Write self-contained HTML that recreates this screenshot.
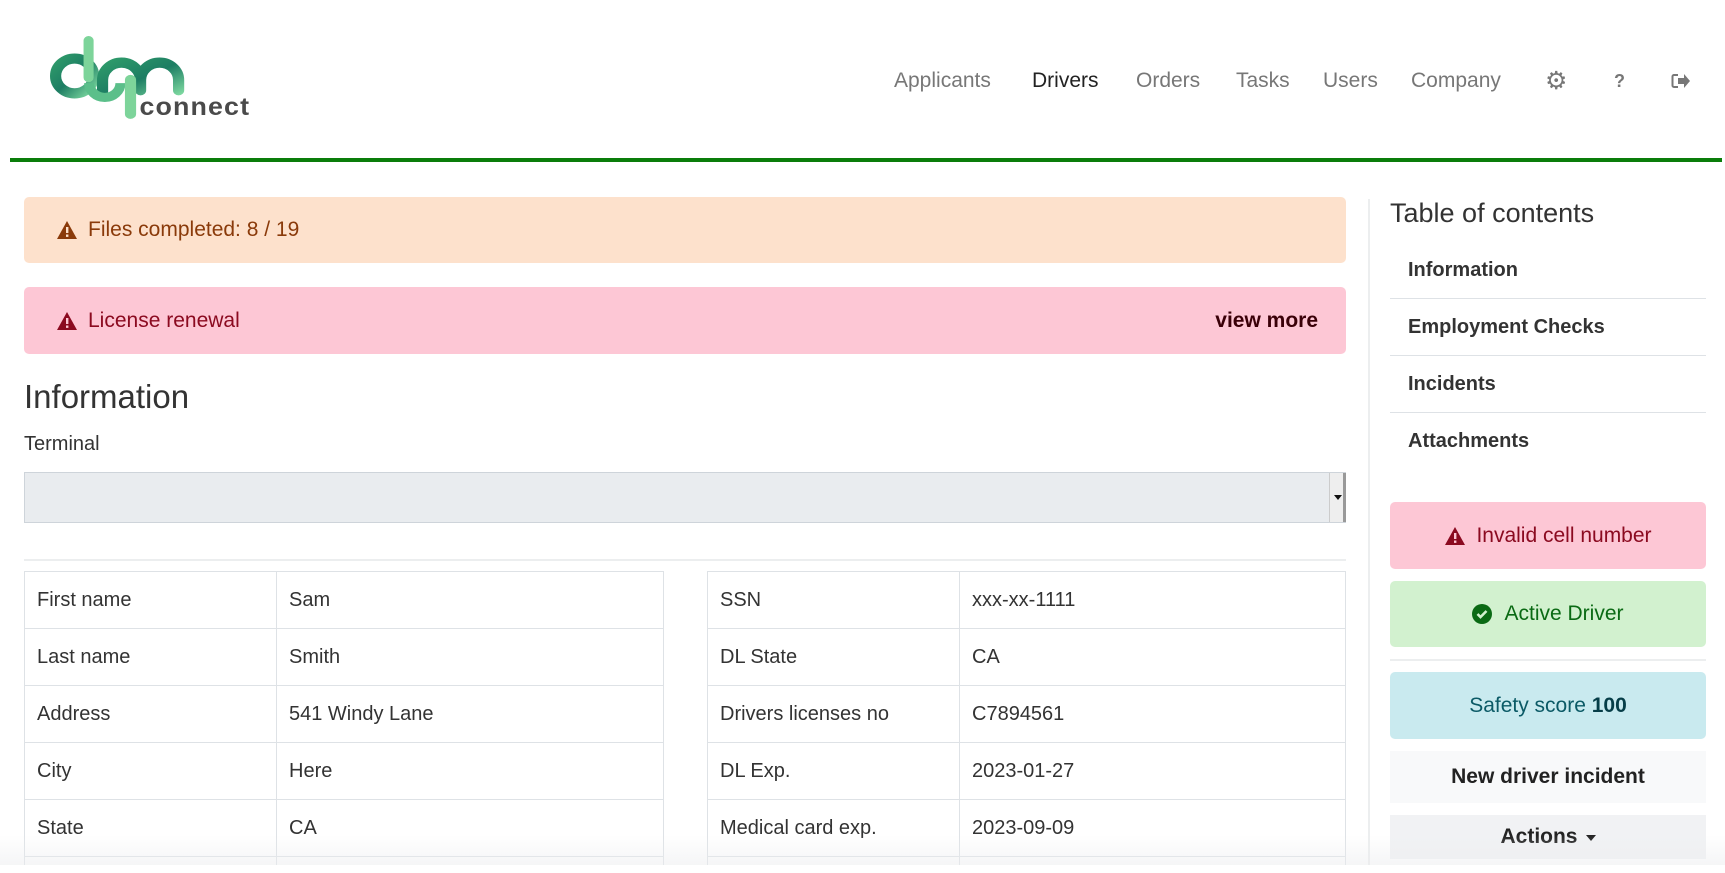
<!DOCTYPE html>
<html><head><meta charset="utf-8"><style>
*{box-sizing:border-box;margin:0;padding:0}
html,body{width:1725px;height:873px;overflow:hidden;background:#fff}
body{font-family:"Liberation Sans",sans-serif;color:#333}
#wrap{position:relative;width:1725px;height:873px;overflow:hidden}
.abs{position:absolute}
.nav{position:absolute;top:69px;font-size:21px;color:#777}
.alert{position:absolute;left:24px;width:1322px;border-radius:5px;font-size:21px;display:flex;align-items:center;padding-left:32px}
.tri{width:22px;height:20px;margin-right:10px}
table{position:absolute;border-collapse:collapse;font-size:20px;color:#333}
td{border:1px solid #dee2e6;height:57px;padding:0 12px}
.toc{position:absolute;left:1390px;width:316px;height:57px;border-bottom:1px solid #dee2e6;font-size:20px;font-weight:bold;color:#333;padding-left:18px;line-height:57px}
.box{position:absolute;left:1390px;width:316px;border-radius:5px;display:flex;align-items:center;justify-content:center;font-size:21px}
</style></head><body><div id="wrap">
<svg class="abs" style="left:50px;top:34px" width="208" height="88" viewBox="0 0 186 86" preserveAspectRatio="none">
<defs><linearGradient id="g" x1="0" y1="0" x2="1" y2="1"><stop offset="0" stop-color="#2e9a6a"/><stop offset=".5" stop-color="#1d7d63"/><stop offset="1" stop-color="#7dd8a0"/></linearGradient></defs>
<circle cx="22" cy="41" r="17" fill="none" stroke="url(#g)" stroke-width="10"/>
<rect x="30" y="2" width="9" height="45" rx="4.5" fill="#7dd49a"/>
<path d="M47 60 V45 a17 17 0 0 1 34 0 V55 M81 45 a17 17 0 0 1 34 0 V55" fill="none" stroke="url(#g)" stroke-width="10" stroke-linecap="round"/>
<path d="M35 48 a14 14 0 0 0 28 0" fill="none" stroke="#5bbf8a" stroke-width="9"/>
<rect x="67" y="40" width="10" height="43" rx="5" fill="#7dd49a"/>
<text x="80" y="79" font-family="Liberation Sans,sans-serif" font-weight="bold" font-size="24" fill="#4a4a4a" letter-spacing="1">connect</text>
</svg>
<div class="nav" style="left:894px">Applicants</div>
<div class="nav" style="left:1032px;color:#222">Drivers</div>
<div class="nav" style="left:1136px">Orders</div>
<div class="nav" style="left:1236px">Tasks</div>
<div class="nav" style="left:1323px">Users</div>
<div class="nav" style="left:1411px">Company</div>
<div class="nav" style="left:1545px;top:66px;font-size:25px;color:#777">⚙</div>
<div class="nav" style="left:1614px;font-weight:bold;font-size:18px;top:71px">?</div>
<svg class="abs" style="left:1671px;top:73px" width="20" height="16" viewBox="0 0 20 16"><path d="M7 2H3a1.5 1.5 0 0 0-1.5 1.5v9A1.5 1.5 0 0 0 3 14h4" fill="none" stroke="#777" stroke-width="2"/><path d="M7 5h6V1l6 7-6 7v-4H7z" fill="#777"/></svg>
<div class="abs" style="left:10px;top:158px;width:1712px;height:4px;background:#0a7d0a"></div>

<div class="alert" style="top:197px;height:66px;background:#fde1cc;color:#8a3a0a"><svg class="tri" viewBox="0 0 22 20"><path d="M11 1L21 19H1z" fill="#8a3a0a"/><rect x="10" y="7" width="2.4" height="6" fill="#fde1cc"/><rect x="10" y="14.5" width="2.4" height="2.4" fill="#fde1cc"/></svg>Files completed: 8 / 19</div>
<div class="alert" style="top:287px;height:67px;background:#fdc7d5;color:#8b0a20"><svg class="tri" viewBox="0 0 22 20"><path d="M11 1L21 19H1z" fill="#8b0a20"/><rect x="10" y="7" width="2.4" height="6" fill="#fdc7d5"/><rect x="10" y="14.5" width="2.4" height="2.4" fill="#fdc7d5"/></svg>License renewal<b style="position:absolute;right:28px;color:#3a0008">view more</b></div>

<div class="abs" style="left:24px;top:378px;font-size:33px;color:#333">Information</div>
<div class="abs" style="left:24px;top:433px;font-size:20px">Terminal</div>
<div class="abs" style="left:24px;top:472px;width:1322px;height:51px;background:#e9ecef;border:1px solid #ced4da"></div>
<div class="abs" style="left:1329px;top:473px;width:17px;height:49px;background:#eee;border-right:3px solid #999;border-left:1px solid #ccc"><div style="position:absolute;left:4px;top:22px;border:4px solid transparent;border-top:5px solid #111"></div></div>
<div class="abs" style="left:24px;top:559px;width:1322px;height:2px;background:#eceeef"></div>

<table style="left:24px;top:571px;width:640px"><colgroup><col style="width:252px"><col></colgroup>
<tr><td>First name</td><td>Sam</td></tr><tr><td>Last name</td><td>Smith</td></tr><tr><td>Address</td><td>541 Windy Lane</td></tr><tr><td>City</td><td>Here</td></tr><tr><td>State</td><td>CA</td></tr><tr><td></td><td></td></tr></table>
<table style="left:707px;top:571px;width:639px"><colgroup><col style="width:252px"><col></colgroup>
<tr><td>SSN</td><td>xxx-xx-1111</td></tr><tr><td>DL State</td><td>CA</td></tr><tr><td>Drivers licenses no</td><td>C7894561</td></tr><tr><td>DL Exp.</td><td>2023-01-27</td></tr><tr><td>Medical card exp.</td><td>2023-09-09</td></tr><tr><td></td><td></td></tr></table>

<div class="abs" style="left:1368px;top:199px;width:2px;height:674px;background:#eceeef"></div>
<div class="abs" style="left:1390px;top:198px;font-size:27px;color:#333">Table of contents</div>
<div class="toc" style="top:242px">Information</div>
<div class="toc" style="top:299px">Employment Checks</div>
<div class="toc" style="top:356px">Incidents</div>
<div class="toc" style="top:413px;border:none">Attachments</div>
<div class="box" style="top:502px;height:67px;background:#fdc7d5;color:#8b0a20"><svg class="tri" viewBox="0 0 22 20"><path d="M11 1L21 19H1z" fill="#8b0a20"/><rect x="10" y="7" width="2.4" height="6" fill="#fdc7d5"/><rect x="10" y="14.5" width="2.4" height="2.4" fill="#fdc7d5"/></svg>Invalid cell number</div>
<div class="box" style="top:581px;height:66px;background:#d2f1cf;color:#0a6a14"><svg width="20" height="20" viewBox="0 0 20 20" style="margin-right:12px"><circle cx="10" cy="10" r="10" fill="#0a6a14"/><path d="M5.5 10l3 3 6-6" stroke="#d2f1cf" stroke-width="2.6" fill="none"/></svg>Active Driver</div>
<div class="abs" style="left:1390px;top:659px;width:316px;height:2px;background:#eceeef"></div>
<div class="box" style="top:672px;height:67px;background:#c9eaef;color:#0b5a66">Safety score&nbsp;<b style="color:#063e48">100</b></div>
<div class="box" style="top:751px;height:52px;background:#f8f9fa;color:#222;font-weight:bold;border-radius:0">New driver incident</div>
<div class="box" style="top:815px;height:44px;background:#f1f2f4;color:#222;font-weight:bold;border-radius:0">Actions<span style="display:inline-block;margin-left:8px;border:5px solid transparent;border-top:6px solid #222;margin-top:6px"></span></div>
<div class="abs" style="left:0;top:835px;width:1725px;height:30px;background:linear-gradient(rgba(240,240,242,0),rgba(235,236,238,.5))"></div>
<div class="abs" style="left:0;top:865px;width:1725px;height:8px;background:#fff"></div>
</div></body></html>
